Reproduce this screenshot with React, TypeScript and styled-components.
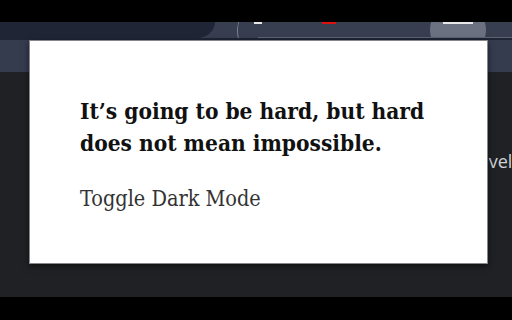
import React from "react";
import styled, { createGlobalStyle } from "styled-components";

const Global = createGlobalStyle`
  html, body { margin: 0; padding: 0; background: #000; }
  body { width: 512px; height: 320px; overflow: hidden; }
`;

const Screen = styled.div`
  position: relative;
  width: 512px;
  height: 320px;
  background: #000;
  display: flex;
  flex-direction: column;
  overflow: hidden;
`;

const TopBlack = styled.div`
  height: 22px;
  flex: none;
  background: #000;
`;

const Toolbar = styled.div`
  position: relative;
  height: 16px;
  flex: none;
  background: #363e50;
  display: flex;
  overflow: hidden;
  border-bottom: 2px solid #1f2535;
`;

const ToolbarLine = styled.div`
  position: absolute;
  left: 258px;
  right: 0;
  bottom: 0;
  height: 1px;
  background: #5d6474;
`;

const ActiveTab = styled.div`
  width: 215px;
  height: 16px;
  flex: none;
  background: #1f2535;
  border-bottom-right-radius: 18px 16px;
`;

const OmniArc = styled.div`
  position: absolute;
  left: 237px;
  top: -24px;
  width: 60px;
  height: 62px;
  border-radius: 50%;
  border: 1px solid #7a808d;
  border-right-color: transparent;
  border-top-color: transparent;
  transform: rotate(10deg);
`;

const Avatar = styled.div`
  position: absolute;
  left: 430px;
  top: -20px;
  width: 56px;
  height: 56px;
  border-radius: 50%;
  background: #6c7181;
`;

const IconStub = styled.div<{ $x: number; $w: number; $c: string }>`
  position: absolute;
  top: 0;
  left: ${(p) => p.$x}px;
  width: ${(p) => p.$w}px;
  height: 2px;
  background: ${(p) => p.$c};
`;

const Page = styled.div`
  height: 257px;
  flex: none;
  background: #202124;
  display: flex;
  flex-direction: column;
`;

const PageHeader = styled.div`
  height: 32px;
  flex: none;
  background: #353c4e;
`;

const PageBody = styled.div`
  flex: 1;
  padding: 77px 0 0 474px;
  font-family: "Open Sans", "Liberation Sans", sans-serif;
  font-size: 18px;
  color: #cfd2d8;
  white-space: nowrap;
  overflow: hidden;
`;

const Popup = styled.div`
  position: absolute;
  left: 29px;
  top: 40px;
  box-sizing: content-box;
  width: 407px;
  height: 168px;
  padding: 54px 0 0 50px;
  background: #fff;
  border: 1px solid #85878d;
  box-shadow: 0 2px 6px rgba(0, 0, 0, 0.55);
  display: flex;
  flex-direction: column;
`;

const Quote = styled.h1`
  margin: 0;
  font-family: "DejaVu Serif Condensed", "DejaVu Serif", "Liberation Serif", serif;
  font-stretch: condensed;
  font-weight: bold;
  font-size: 22.5px;
  line-height: 32px;
  color: #111;
`;

const Toggle = styled.button`
  margin: 27px 0 0;
  padding: 0;
  border: none;
  background: none;
  align-self: flex-start;
  font-family: "DejaVu Serif Condensed", "DejaVu Serif", "Liberation Serif", serif;
  font-stretch: condensed;
  font-size: 21.5px;
  line-height: 26px;
  color: #333;
  cursor: pointer;
`;

export default function App() {
  return (
    <Screen>
      <Global />
      <TopBlack />
      <Toolbar>
        <ActiveTab />
        <OmniArc />
        <Avatar />
        <IconStub $x={254} $w={8} $c="#e8e8e8" />
        <IconStub $x={322} $w={14} $c="#d11" />
        <IconStub $x={443} $w={30} $c="#e8e8ea" />
        <ToolbarLine />
      </Toolbar>
      <Page>
        <PageHeader />
        <PageBody>level</PageBody>
      </Page>
      <Popup>
        <Quote>
          It’s going to be hard, but hard
          <br />
          does not mean impossible.
        </Quote>
        <Toggle>Toggle Dark Mode</Toggle>
      </Popup>
    </Screen>
  );
}
